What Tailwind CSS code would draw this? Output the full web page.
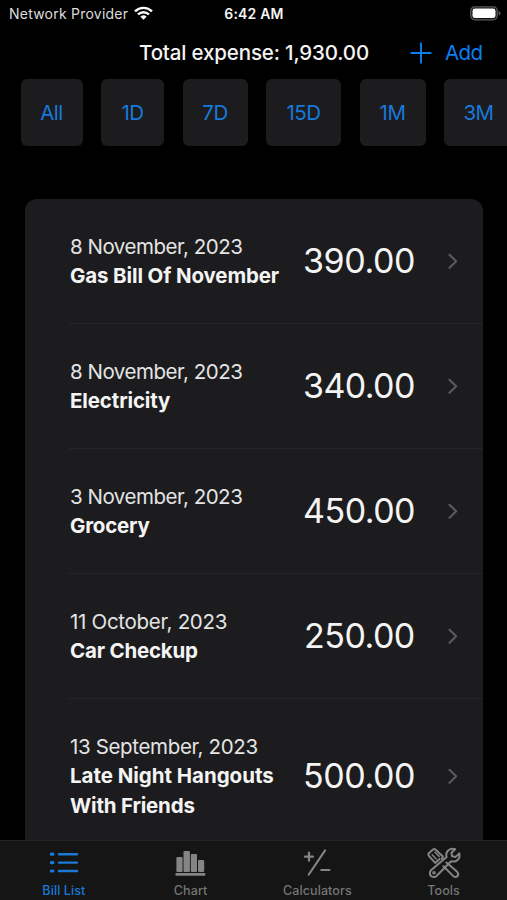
<!DOCTYPE html>
<html lang="en">
<head>
<meta charset="utf-8">
<title>Bills</title>
<script src="https://cdn.jsdelivr.net/npm/@tailwindcss/browser@4"></script>
</head>
<body class="bg-black">
<div class="relative flex h-[900px] w-[507px] flex-col overflow-hidden bg-black font-['Inter',sans-serif] text-[#f4f4f4]">
  <header class="grid h-7 shrink-0 grid-cols-3 items-center pl-[9px] pr-[8px] text-[14px] leading-7">
    <div class="flex items-center gap-[6px] whitespace-nowrap text-[#dedede]">
      <span class="tracking-[0.23px]">Network Provider</span>
      <svg class="-mt-[2px] h-[14px] w-[19px] shrink-0" viewBox="0 0 19 14" fill="none" stroke="#fff" stroke-width="2.4"><path d="M1 5.3a12.2 12.2 0 0 1 17 0M4 8.5a7.9 7.9 0 0 1 11 0"/><path d="M9.5 13.8 6.4 10.8a4.5 4.5 0 0 1 6.2 0Z" fill="#fff" stroke="none"/></svg>
    </div>
    <div class="text-center font-semibold tracking-[0.2px]">6:42 AM</div>
    <svg class="-mr-[2px] -mt-[1px] h-[15px] w-[31px] justify-self-end" viewBox="0 0 31 15"><rect x=".8" y=".8" width="26.4" height="13" rx="4" fill="#111" stroke="#5c5c5c" stroke-width="1.3"/><rect x="2.5" y="2.5" width="23" height="9.6" rx="2.4" fill="#fff"/><path d="M28.6 5v4.6q2-.8 2-2.3t-2-2.3Z" fill="#5c5c5c"/></svg>
  </header>

  <div class="flex h-[51px] shrink-0 items-center pl-[139px] text-[20.5px]">
    <h1 class="w-[271px] whitespace-nowrap pb-[1px] font-medium tracking-[-0.15px]">Total expense: 1,930.00</h1>
    <button class="flex items-center gap-[13px] pb-[1px] text-[#0a7ff0]">
      <svg class="-mt-[1px] h-[22px] w-[22px]" viewBox="0 0 22 22" fill="none" stroke="currentColor" stroke-width="1.9" stroke-linecap="round"><path d="M11 1.3v19.4M1.3 11h19.4"/></svg>
      <span class="tracking-[-0.6px]">Add</span>
    </button>
  </div>

  <nav class="ml-[20.5px] flex h-[67px] shrink-0 gap-[18.5px] text-[20.5px] tracking-[-0.5px] text-[#1879dc]">
    <button class="w-[62px] shrink-0 rounded-md bg-[#1c1c1e] pt-[2px]">All</button>
    <button class="w-[63px] shrink-0 rounded-md bg-[#1c1c1e] pt-[2px]">1D</button>
    <button class="w-[65px] shrink-0 rounded-md bg-[#1c1c1e] pt-[2px]">7D</button>
    <button class="w-[75px] shrink-0 rounded-md bg-[#1c1c1e] pt-[2px]">15D</button>
    <button class="w-[66px] shrink-0 rounded-md bg-[#1c1c1e] pt-[2px]">1M</button>
    <button class="w-[69px] shrink-0 rounded-md bg-[#1c1c1e] pt-[2px]">3M</button>
  </nav>

  <main class="ml-[25px] mt-[53px] flex h-[641px] w-[457.5px] shrink-0 flex-col overflow-hidden rounded-t-[12px] bg-[#1c1c1e] pl-[44px]">
    <article class="flex h-[125px] shrink-0 items-center border-b border-[#262628]">
      <div class="w-[234px] whitespace-nowrap pl-[1px] pt-[2px] text-[20.5px]"><p class="leading-[28px] tracking-[-0.48px] text-[#e4e4e4]">8 November, 2023</p><p class="leading-[30px] font-bold tracking-[-0.13px]">Gas Bill Of November</p></div>
      <span class="w-[145px] pb-[1px] text-[34px] tracking-[-0.4px]">390.00</span>
      <svg class="h-4 w-[10px]" viewBox="0 0 10 16" fill="none" stroke="#5b5b5e" stroke-width="2.1" stroke-linecap="round" stroke-linejoin="round"><path d="m1.5 1.8 6.7 6.5-6.7 6.5"/></svg>
    </article>
    <article class="flex h-[125px] shrink-0 items-center border-b border-[#262628]">
      <div class="w-[234px] whitespace-nowrap pl-[1px] pt-[2px] text-[20.5px]"><p class="leading-[28px] tracking-[-0.48px] text-[#e4e4e4]">8 November, 2023</p><p class="leading-[30px] font-bold tracking-[-0.13px]">Electricity</p></div>
      <span class="w-[145px] pb-[1px] text-[34px] tracking-[-0.6px]">340.00</span>
      <svg class="h-4 w-[10px]" viewBox="0 0 10 16" fill="none" stroke="#5b5b5e" stroke-width="2.1" stroke-linecap="round" stroke-linejoin="round"><path d="m1.5 1.8 6.7 6.5-6.7 6.5"/></svg>
    </article>
    <article class="flex h-[125px] shrink-0 items-center border-b border-[#262628]">
      <div class="w-[234px] whitespace-nowrap pl-[1px] pt-[2px] text-[20.5px]"><p class="leading-[28px] tracking-[-0.48px] text-[#e4e4e4]">3 November, 2023</p><p class="leading-[30px] font-bold tracking-[-0.2px]">Grocery</p></div>
      <span class="w-[145px] pb-[1px] text-[34px] tracking-[-0.5px]">450.00</span>
      <svg class="h-4 w-[10px]" viewBox="0 0 10 16" fill="none" stroke="#5b5b5e" stroke-width="2.1" stroke-linecap="round" stroke-linejoin="round"><path d="m1.5 1.8 6.7 6.5-6.7 6.5"/></svg>
    </article>
    <article class="flex h-[125px] shrink-0 items-center border-b border-[#262628]">
      <div class="w-[234px] whitespace-nowrap pl-[1px] pt-[2px] text-[20.5px]"><p class="leading-[28px] tracking-[-0.3px] text-[#e4e4e4]">11 October, 2023</p><p class="leading-[30px] font-bold tracking-[-0.2px]">Car Checkup</p></div>
      <span class="w-[145px] pb-[1px] pl-[1px] text-[34px] tracking-[-0.5px]">250.00</span>
      <svg class="h-4 w-[10px]" viewBox="0 0 10 16" fill="none" stroke="#5b5b5e" stroke-width="2.1" stroke-linecap="round" stroke-linejoin="round"><path d="m1.5 1.8 6.7 6.5-6.7 6.5"/></svg>
    </article>
    <article class="flex h-[154px] shrink-0 items-center">
      <div class="w-[234px] whitespace-nowrap pl-[1px] pt-[2px] text-[20.5px]"><p class="leading-[28px] tracking-[-0.35px] text-[#e4e4e4]">13 September, 2023</p><p class="leading-[30px] font-bold tracking-[-0.03px]">Late Night Hangouts<br><span class="tracking-[-0.2px]">With Friends</span></p></div>
      <span class="w-[145px] pb-[1px] text-[34px] tracking-[-0.4px]">500.00</span>
      <svg class="h-4 w-[10px]" viewBox="0 0 10 16" fill="none" stroke="#5b5b5e" stroke-width="2.1" stroke-linecap="round" stroke-linejoin="round"><path d="m1.5 1.8 6.7 6.5-6.7 6.5"/></svg>
    </article>
  </main>

  <footer class="grid h-[60px] shrink-0 grid-cols-4 border-t border-[#222223] bg-[#151515] text-[12.5px] font-medium tracking-[0.1px] text-[#757575]">
    <a class="flex flex-col items-center text-[#1b78d6]">
      <svg class="mt-[2px] h-10 w-10 shrink-0" viewBox="0 0 40 40" fill="none" stroke="currentColor" stroke-linecap="round"><path stroke-width="2.4" d="M16 11.2h18M16 19.6h18M16 28h18"/><path stroke-width="3.2" d="M8.3 11.2h1.6M8.3 19.6h1.6M8.3 28h1.6"/></svg>
      <span class="pl-[1px] leading-4">Bill List</span>
    </a>
    <a class="flex flex-col items-center">
      <svg class="mt-[2px] h-10 w-10 shrink-0" viewBox="0 0 40 40" fill="#858585"><rect x="6.4" y="14" width="6.2" height="15" rx="1"/><rect x="13.5" y="8" width="6.4" height="21" rx="1"/><rect x="20.8" y="11" width="6.2" height="18" rx="1"/><rect x="28" y="17" width="6.2" height="12" rx="1"/><rect x="5.4" y="30" width="30" height="2.7" rx="1"/></svg>
      <span class="pl-[1px] leading-4">Chart</span>
    </a>
    <a class="flex flex-col items-center">
      <svg class="mt-[2px] h-10 w-10 shrink-0" viewBox="0 0 40 40" fill="none" stroke="#858585" stroke-width="2.2" stroke-linecap="round"><path d="M28 7.5 11.8 31.5M8 13.7h8M12 9.7v8M24.3 27h8.2"/></svg>
      <span class="pl-[1px] leading-4">Calculators</span>
    </a>
    <a class="flex flex-col items-center">
      <svg class="mt-[2px] h-10 w-10 shrink-0" viewBox="0 0 40 40" fill="none" stroke="#858585" stroke-width="2" stroke-linecap="round" stroke-linejoin="round"><path d="m15.6 16-4.4 3.9-6.2-6.8q-1.3-1.6.1-3.1l3.6-3.3q1.6-1.2 3 .1l7.2 6.6-1 2.5M22.4 19.6l10.5 9q2.4 2.3.6 4.4t-4.4-.1l-9.7-9.6"/><path stroke-width="1.5" d="m8.2 11.8 4 4.2M11 9.2l4.2 4.2"/><path d="M22.6 14c-1.6-5.1 3-9.6 8.6-7.8l-3.8 3.6.7 3.4 3.6.7 3.6-3.5c1.4 5.4-3.2 9.4-8.2 7.8L13.2 32.3a4 4 0 1 1-6.2-5Z"/><circle cx="10" cy="29.8" r=".8"/></svg>
      <span class="leading-4">Tools</span>
    </a>
  </footer>
</div>
</body>
</html>
